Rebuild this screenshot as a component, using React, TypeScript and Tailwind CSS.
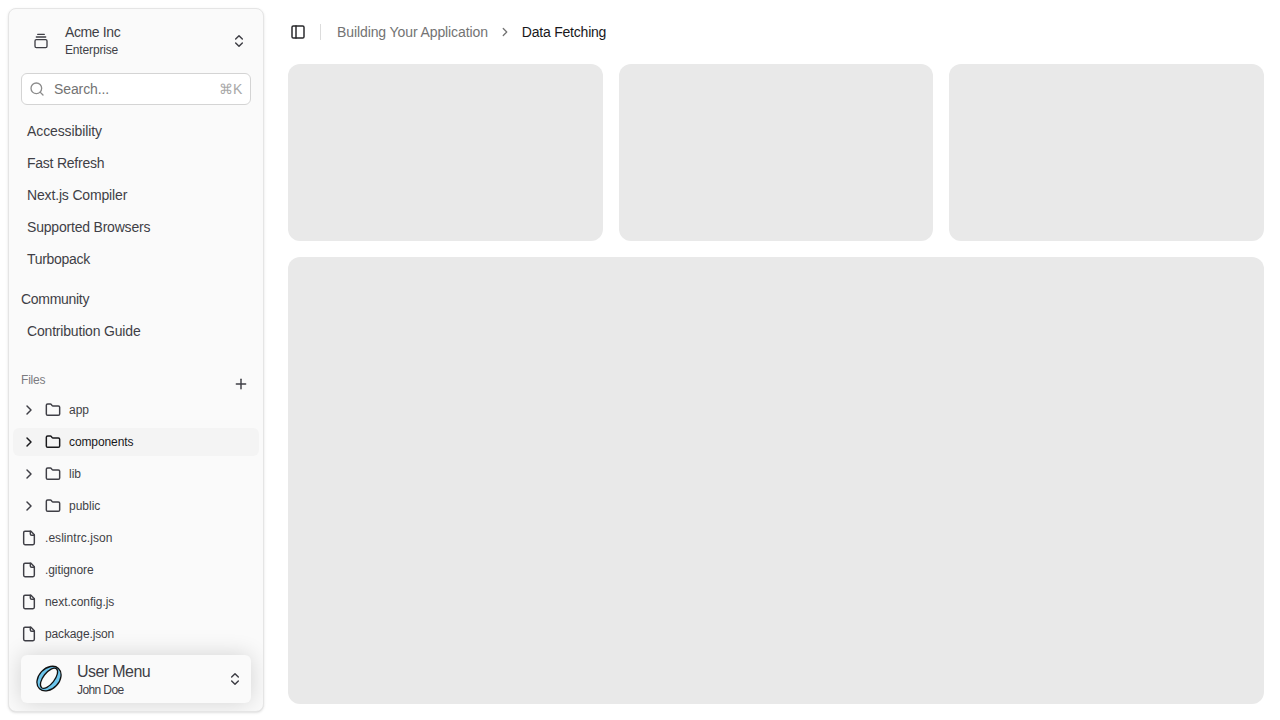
import {
  ChevronRight,
  ChevronsUpDown,
  Folder,
  GalleryVerticalEnd,
  PanelLeft,
  Plus,
  Search,
} from "lucide-react";

const links = [
  { label: "Accessibility", tracking: "tracking-[-0.1px]" },
  { label: "Fast Refresh", tracking: "tracking-[-0.24px]" },
  { label: "Next.js Compiler", tracking: "tracking-[-0.16px]" },
  { label: "Supported Browsers", tracking: "tracking-[-0.2px]" },
  { label: "Turbopack", tracking: "tracking-[-0.3px]" },
];

const folders = [
  { label: "app", active: false },
  { label: "components", active: true },
  { label: "lib", active: false },
  { label: "public", active: false },
];

const files = [
  { label: ".eslintrc.json", tracking: "tracking-[0.05px]" },
  { label: ".gitignore", tracking: "tracking-[-0.08px]" },
  { label: "next.config.js", tracking: "tracking-[-0.06px]" },
  { label: "package.json", tracking: "tracking-[-0.13px]" },
];

function FileIcon() {
  return (
    <svg
      className="size-4"
      viewBox="0 0 24 24"
      fill="none"
      stroke="currentColor"
      strokeWidth="2.2"
      strokeLinecap="round"
      strokeLinejoin="round"
    >
      <path d="M15 2H6a2 2 0 0 0-2 2v16a2 2 0 0 0 2 2h12a2 2 0 0 0 2-2V7Z" />
      <path d="M14 2v4a2 2 0 0 0 2 2h4" />
    </svg>
  );
}

function RingLogo() {
  return (
    <svg width="28" height="28" viewBox="0 0 28 28" fill="none" stroke="#111" strokeWidth="1.3">
      <ellipse cx="14" cy="13.6" rx="10.2" ry="13.9" transform="rotate(43 14 13.6)" fill="#6cc5ec" />
      <ellipse cx="14" cy="13.2" rx="5.6" ry="12" transform="rotate(38 14 13.2)" fill="#fafafa" />
    </svg>
  );
}

function Sidebar() {
  return (
    <aside className="relative flex h-[704px] w-64 shrink-0 flex-col overflow-hidden rounded-lg border border-[#e5e5e5] bg-[#fafafa] text-[#3f3f46] shadow-sm">
      <div className="mt-2 flex h-12 items-center px-6">
        <GalleryVerticalEnd className="size-4 shrink-0" />
        <div className="ml-4 flex-1">
          <div className="text-sm leading-[17px] tracking-[-0.38px]">Acme Inc</div>
          <div className="pt-px text-xs leading-[17px] tracking-[-0.16px]">Enterprise</div>
        </div>
        <ChevronsUpDown className="-mr-2 size-4" strokeWidth={2.2} />
      </div>

      <div className="mx-3 mt-2 flex h-8 shrink-0 items-center rounded-md border border-[#d4d4d4] bg-white px-[7px]">
        <Search className="size-4 text-[#8c8c8c]" />
        <span className="ml-[9px] flex-1 pb-px text-sm leading-5 tracking-[-0.1px] text-[#737373]">Search...</span>
        <span className="mr-px flex items-center text-sm leading-5 tracking-[-0.4px] text-[#a8a8a8]">⌘K</span>
      </div>

      <nav className="mt-[11px] flex flex-col text-sm">
        {links.map((l) => (
          <a key={l.label} className={"flex h-8 items-center px-[18px] pb-0.5 " + l.tracking}>
            {l.label}
          </a>
        ))}
        <div className="mt-2 flex h-8 items-center px-3 pb-0.5 tracking-[-0.3px]">Community</div>
        <a className="flex h-8 items-center px-[18px] pb-0.5 tracking-[-0.18px]">Contribution Guide</a>
      </nav>

      <div className="mt-4 flex h-8 items-center justify-between pl-3 pr-[14px]">
        <span className="text-xs tracking-[-0.2px] text-[#7b7b80]">Files</span>
        <Plus className="mt-2 size-4" strokeWidth={2.2} />
      </div>

      <div className="flex flex-col gap-1 px-1 text-xs">
        {folders.map((f) => (
          <div
            key={f.label}
            className={
              "flex h-7 shrink-0 items-center gap-2 rounded-md px-2 " +
              (f.active ? "bg-[#f4f4f4] tracking-[-0.1px] text-[#18181b]" : "")
            }
          >
            <ChevronRight className="size-4" strokeWidth={2.2} />
            <Folder className="size-4" strokeWidth={2.2} />
            <span>{f.label}</span>
          </div>
        ))}
        {files.map((f) => (
          <div key={f.label} className={"flex h-7 shrink-0 items-center gap-2 px-2 " + f.tracking}>
            <FileIcon />
            <span>{f.label}</span>
          </div>
        ))}
      </div>

      <div className="absolute bottom-2 left-3 right-3 flex h-12 items-center rounded-md bg-[#fafafa] pl-[14px] pr-2 shadow-[0_0_22px_rgba(0,0,0,0.16)]">
        <RingLogo />
        <div className="ml-[14px] flex-1 pt-px">
          <div className="text-base leading-[21px] tracking-[-0.58px]">User Menu</div>
          <div className="text-xs leading-[17px] tracking-[-0.6px]">John Doe</div>
        </div>
        <ChevronsUpDown className="size-4" strokeWidth={2.2} />
      </div>
    </aside>
  );
}

export default function App() {
  return (
    <div className="flex h-[720px] w-[1280px] overflow-hidden bg-white p-2 pr-4 font-['Liberation_Sans',Arial,sans-serif]">
      <Sidebar />
      <main className="ml-6 flex flex-1 flex-col">
        <header className="flex h-12 shrink-0 items-center pl-0.5 text-sm">
          <PanelLeft className="size-4 text-[#27272a]" strokeWidth={2.2} />
          <div className="ml-[14px] h-4 w-px bg-[#dcdcdc]" />
          <span className="ml-4 pb-px tracking-[-0.1px] text-[#737373]">Building Your Application</span>
          <ChevronRight className="ml-[10px] size-[14px] text-[#737373]" strokeWidth={2.2} />
          <span className="ml-[10px] pb-px tracking-[-0.22px] text-[#18181b]">Data Fetching</span>
        </header>
        <div className="mt-2 grid h-[177px] shrink-0 grid-cols-3 gap-4">
          <div className="rounded-xl bg-[#e9e9e9]" />
          <div className="rounded-xl bg-[#e9e9e9]" />
          <div className="rounded-xl bg-[#e9e9e9]" />
        </div>
        <div className="mb-2 mt-4 flex-1 rounded-xl bg-[#e9e9e9]" />
      </main>
    </div>
  );
}
